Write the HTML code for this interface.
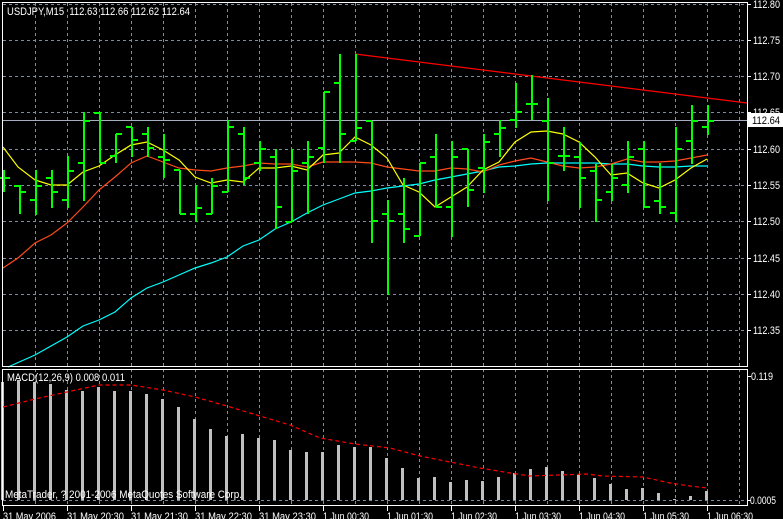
<!DOCTYPE html>
<html><head><meta charset="utf-8"><style>
html,body{margin:0;padding:0;background:#000;width:783px;height:519px;overflow:hidden}
svg{display:block}
text{font-family:"Liberation Sans",sans-serif;font-size:11px;fill:#fff}
</style></head><body>
<svg width="783" height="519" viewBox="0 0 783 519" xmlns="http://www.w3.org/2000/svg">
<rect width="783" height="519" fill="#000"/>
<g stroke="#7d8ca3" stroke-width="1" stroke-dasharray="3 3" fill="none">
<path d="M35.5 3V505M67.5 3V505M99.5 3V505M131.5 3V505M163.5 3V505M195.5 3V505M227.5 3V505M259.5 3V505M291.5 3V505M323.5 3V505M355.5 3V505M387.5 3V505M419.5 3V505M451.5 3V505M483.5 3V505M515.5 3V505M547.5 3V505M579.5 3V505M611.5 3V505M643.5 3V505M675.5 3V505M707.5 3V505M739.5 3V505"/>
<path d="M3 4.5H746M3 40.5H746M3 76.5H746M3 112.5H746M3 149.5H746M3 185.5H746M3 221.5H746M3 258.5H746M3 294.5H746M3 330.5H746M3 500.5H746"/>
</g>
<rect x="0" y="367" width="783" height="2" fill="#000"/>
<line x1="3" y1="120.5" x2="747" y2="120.5" stroke="#a6afbf" stroke-width="1"/>
<line x1="355" y1="54" x2="747" y2="103" stroke="#ff0000" stroke-width="1.3"/>
<polyline fill="none" stroke="#00ffff" stroke-width="1.2" points="8,367 35,355 67,337 83,326 99,320 115,312 131,298 147,288 163,282 179,275 195,268 211,263 227,257 243,246 259,240 275,229 291,222 307,213 323,205 339,199 355,193 371,191 387,188 403,186 419,184 435,180 451,177 467,174 483,171 499,167 515,166 531,164 547,163 563,163 579,163 595,163 611,164 627,164 643,166 659,167 675,167 691,166 707,166"/>
<polyline fill="none" stroke="#ff4a1a" stroke-width="1.2" points="3,268 18,258 35,243 51,235 67,223 83,207 99,190 115,177 131,163 147,156 163,162 179,168 195,170 211,171 227,168 243,166 259,163 275,164 291,164 307,167 323,162 339,162 355,162 371,163 387,167 403,169 419,171 435,171 451,168 467,169 483,172 499,165 515,161 531,158 547,162 563,166 579,168 595,167 611,164 627,159 643,162 659,162 675,161 691,158 707,155"/>
<polyline fill="none" stroke="#ffff00" stroke-width="1.2" points="3,147 18,167 35,180 51,185 67,185 83,172 99,166 115,155 131,145 147,142 163,150 179,160 195,177 211,183 227,180 243,182 259,168 275,168 291,166 307,170 323,155 339,153 355,137 371,145 387,158 403,185 419,192 435,207 451,197 467,187 483,170 499,162 515,142 531,132 547,131 563,134 579,142 595,157 611,175 627,173 643,183 659,188 675,180 691,168 707,159"/>
<path fill="none" stroke="#00ff00" stroke-width="2" d="
M4 170V192M-2 178H4M4 178H10
M20 185V214M14 186H20M20 192H26
M36 170V215M30 200H36M36 186H42
M52 170V208M46 178H52M52 192H58
M68 156V208M62 200H68M68 171H74
M84 112V201M78 163H84M84 121H90
M100 112V163M94 113H100M100 163H106
M116 134V163M110 156H116M116 134H122
M132 127V157M126 127H132M132 140H138
M148 127V157M142 134H148M148 148H154
M164 134V178M158 157H164M164 160H170
M180 170V214M174 170H180M180 214H186
M196 185V222M190 214H196M196 208H202
M212 178V214M206 214H212M212 186H218
M228 120V192M222 192H228M228 127H234
M244 127V185M238 134H244M244 178H250
M260 141V171M254 163H260M260 149H266
M276 149V229M270 157H276M276 207H282
M292 149V222M286 222H292M292 171H298
M308 141V214M302 163H308M308 157H314
M324 92V163M318 148H324M324 92H330
M340 54V163M334 83H340M340 134H346
M356 54V141M350 141H356M356 128H362
M372 121V243M366 121H372M372 221H378
M388 200V295M382 214H388M388 221H394
M404 178V243M398 214H404M404 229H410
M420 163V236M414 236H420M420 163H426
M436 134V207M430 157H436M436 207H442
M452 141V237M446 207H452M452 157H458
M468 149V207M462 149H468M468 190H474
M484 134V193M478 168H484M484 142H490
M500 120V157M494 134H500M500 128H506
M516 83V128M510 120H516M516 112H522
M532 75V120M526 104H532M532 104H538
M548 98V201M542 121H548M548 163H554
M564 127V171M558 156H564M564 156H570
M580 142V208M574 157H580M580 178H586
M596 164V222M590 171H596M596 200H602
M612 164V201M606 192H612M612 178H618
M628 141V193M622 185H628M628 157H634
M644 141V208M638 149H644M644 207H650
M660 163V214M654 201H660M660 207H666
M676 127V222M670 213H676M676 149H682
M692 105V164M686 141H692M692 121H698
M708 105V135M702 127H708M708 121H714"/>
<g fill="#c0c0c0">
<rect x="1" y="382" width="3" height="118"/><rect x="17" y="380" width="3" height="120"/><rect x="33" y="382" width="3" height="118"/><rect x="49" y="384" width="3" height="116"/><rect x="65" y="390" width="3" height="110"/><rect x="81" y="391" width="3" height="109"/><rect x="97" y="387" width="3" height="113"/><rect x="113" y="391" width="3" height="109"/><rect x="129" y="391" width="3" height="109"/><rect x="145" y="394" width="3" height="106"/><rect x="161" y="399" width="3" height="101"/><rect x="177" y="407" width="3" height="93"/><rect x="193" y="419" width="3" height="81"/><rect x="209" y="429" width="3" height="71"/><rect x="225" y="436" width="3" height="64"/><rect x="241" y="434" width="3" height="66"/><rect x="257" y="438" width="3" height="62"/><rect x="273" y="440" width="3" height="60"/><rect x="289" y="450" width="3" height="50"/><rect x="305" y="452" width="3" height="48"/><rect x="321" y="452" width="3" height="48"/><rect x="337" y="445" width="3" height="55"/><rect x="353" y="447" width="3" height="53"/><rect x="369" y="447" width="3" height="53"/><rect x="385" y="458" width="3" height="42"/><rect x="401" y="468" width="3" height="32"/><rect x="417" y="478" width="3" height="22"/><rect x="433" y="477" width="3" height="23"/><rect x="449" y="482" width="3" height="18"/><rect x="465" y="480" width="3" height="20"/><rect x="481" y="481" width="3" height="19"/><rect x="497" y="477" width="3" height="23"/><rect x="513" y="473" width="3" height="27"/><rect x="529" y="469" width="3" height="31"/><rect x="545" y="467" width="3" height="33"/><rect x="561" y="471" width="3" height="29"/><rect x="577" y="474" width="3" height="26"/><rect x="593" y="478" width="3" height="22"/><rect x="609" y="484" width="3" height="16"/><rect x="625" y="489" width="3" height="11"/><rect x="641" y="488" width="3" height="12"/><rect x="657" y="493" width="3" height="7"/><rect x="673" y="499" width="3" height="1"/><rect x="689" y="496" width="3" height="4"/><rect x="705" y="491" width="3" height="9"/>
</g>
<polyline fill="none" stroke="#ff0000" stroke-width="1.2" stroke-dasharray="4 3" points="3,407 35,399 67,392 99,385 131,385 163,390 195,397 227,406 250,413 290,425 320,438 355,444 390,448 420,456 450,462 480,468 510,473 530,476 587,474 603,476 643,477 670,483 690,486 707,488"/>
<g fill="none" stroke="#fff" stroke-width="1">
<rect x="2.5" y="2.5" width="745" height="364"/>
<rect x="2.5" y="369.5" width="745" height="136"/>
<path d="M3.5 506V511M67.5 506V511M131.5 506V511M195.5 506V511M259.5 506V511M323.5 506V511M387.5 506V511M451.5 506V511M515.5 506V511M579.5 506V511M643.5 506V511M707.5 506V511"/>
<path d="M748 4.5H751M748 40.5H751M748 76.5H751M748 112.5H751M748 149.5H751M748 185.5H751M748 221.5H751M748 258.5H751M748 294.5H751M748 330.5H751M748 376.5H751M748 500.5H751"/>
</g>
<rect x="748" y="113" width="35" height="14" fill="#fff"/>
<text x="7" y="15" textLength="183" lengthAdjust="spacingAndGlyphs" xml:space="preserve">USDJPY,M15  112.63 112.66 112.62 112.64</text>
<text x="7" y="381" textLength="118" lengthAdjust="spacingAndGlyphs">MACD(12,26,9) 0.008 0.011</text>
<text x="5" y="498" textLength="237" lengthAdjust="spacingAndGlyphs">MetaTrader, ? 2001-2006 MetaQuotes Software Corp.</text>
<g>
<text x="753" y="8" textLength="27" lengthAdjust="spacingAndGlyphs">112.80</text><text x="753" y="44" textLength="27" lengthAdjust="spacingAndGlyphs">112.75</text><text x="753" y="80" textLength="27" lengthAdjust="spacingAndGlyphs">112.70</text><text x="753" y="116" textLength="27" lengthAdjust="spacingAndGlyphs">112.65</text><text x="753" y="153" textLength="27" lengthAdjust="spacingAndGlyphs">112.60</text><text x="753" y="189" textLength="27" lengthAdjust="spacingAndGlyphs">112.55</text><text x="753" y="225" textLength="27" lengthAdjust="spacingAndGlyphs">112.50</text><text x="753" y="262" textLength="27" lengthAdjust="spacingAndGlyphs">112.45</text><text x="753" y="298" textLength="27" lengthAdjust="spacingAndGlyphs">112.40</text><text x="753" y="334" textLength="27" lengthAdjust="spacingAndGlyphs">112.35</text>
<text x="752" y="124" textLength="28" lengthAdjust="spacingAndGlyphs" style="fill:#000">112.64</text>
<text x="751" y="380" textLength="22" lengthAdjust="spacingAndGlyphs">0.119</text><text x="750" y="504" textLength="26" lengthAdjust="spacingAndGlyphs">0.0005</text>
</g>
<g>
<text x="3" y="520" textLength="53" lengthAdjust="spacingAndGlyphs">31 May 2006</text>
<text x="67" y="520" textLength="57" lengthAdjust="spacingAndGlyphs">31 May 20:30</text>
<text x="131" y="520" textLength="57" lengthAdjust="spacingAndGlyphs">31 May 21:30</text>
<text x="195" y="520" textLength="57" lengthAdjust="spacingAndGlyphs">31 May 22:30</text>
<text x="259" y="520" textLength="57" lengthAdjust="spacingAndGlyphs">31 May 23:30</text>
<text x="323" y="520" textLength="46" lengthAdjust="spacingAndGlyphs">1 Jun 00:30</text>
<text x="387" y="520" textLength="46" lengthAdjust="spacingAndGlyphs">1 Jun 01:30</text>
<text x="451" y="520" textLength="46" lengthAdjust="spacingAndGlyphs">1 Jun 02:30</text>
<text x="515" y="520" textLength="46" lengthAdjust="spacingAndGlyphs">1 Jun 03:30</text>
<text x="579" y="520" textLength="46" lengthAdjust="spacingAndGlyphs">1 Jun 04:30</text>
<text x="643" y="520" textLength="46" lengthAdjust="spacingAndGlyphs">1 Jun 05:30</text>
<text x="707" y="520" textLength="46" lengthAdjust="spacingAndGlyphs">1 Jun 06:30</text>
</g>
</svg>
</body></html>
